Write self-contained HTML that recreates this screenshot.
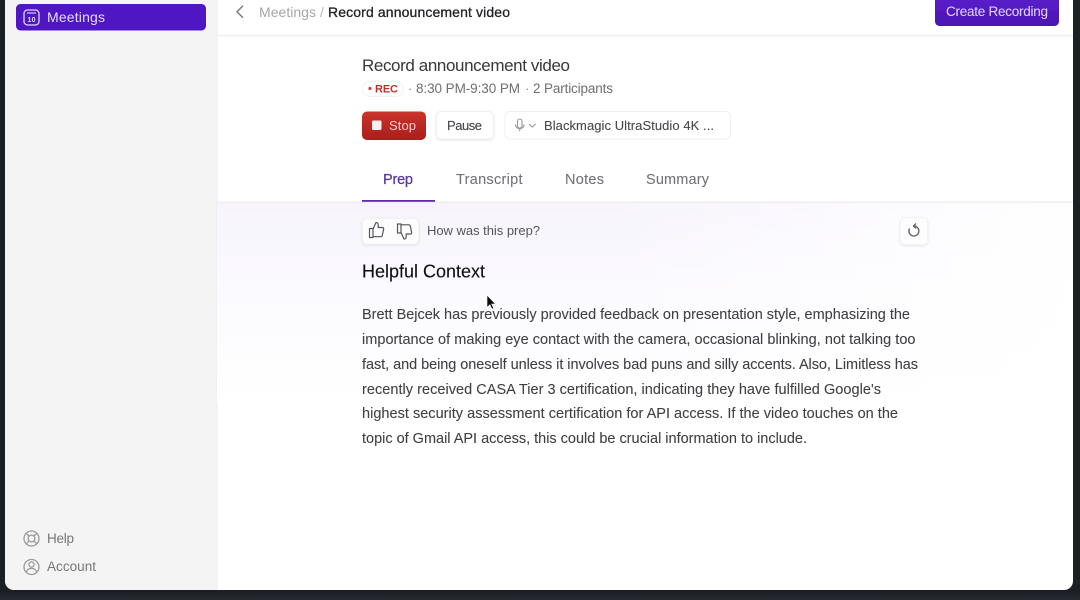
<!DOCTYPE html>
<html><head><meta charset="utf-8"><style>
html,body{margin:0;padding:0;width:1080px;height:600px;overflow:hidden;background:#1c1f25}
svg{display:block;position:absolute;left:0;top:0}
text{font-family:"Liberation Sans",sans-serif;white-space:pre}
</style></head><body>
<svg width="1080" height="600" viewBox="0 0 1080 600" xmlns="http://www.w3.org/2000/svg">
<defs>
<linearGradient id="bg" x1="0" y1="0" x2="0" y2="1"><stop offset="0" stop-color="#1a1c22"/><stop offset="1" stop-color="#272a31"/></linearGradient>
<linearGradient id="lav" x1="0" y1="0" x2="0" y2="1"><stop offset="0" stop-color="#f7f4fd"/><stop offset=".45" stop-color="#fbfafe"/><stop offset="1" stop-color="#ffffff"/></linearGradient>
<linearGradient id="fadeR" x1="0" y1="0" x2="1" y2="0"><stop offset="0" stop-color="#fff" stop-opacity="0"/><stop offset=".45" stop-color="#fff" stop-opacity="0"/><stop offset="1" stop-color="#fff" stop-opacity=".95"/></linearGradient>
<linearGradient id="stop" x1="0" y1="0" x2="0" y2="1"><stop offset="0" stop-color="#cc332b"/><stop offset="1" stop-color="#a81f1b"/></linearGradient>
<linearGradient id="cr" x1="0" y1="0" x2="0" y2="1"><stop offset="0" stop-color="#5d1fd0"/><stop offset="1" stop-color="#4a14b0"/></linearGradient>
<clipPath id="win"><rect x="5" y="-10" width="1068" height="600" rx="9"/></clipPath>
<filter id="sh" x="-20%" y="-20%" width="140%" height="150%"><feDropShadow dx="0" dy="1" stdDeviation="1.200" flood-color="#000" flood-opacity=".10"/></filter>
<filter id="soft" x="0" y="0" width="100%" height="100%" filterUnits="userSpaceOnUse"><feGaussianBlur stdDeviation=".35"/></filter>
</defs>
<rect width="1080" height="600" fill="#1c1f25"/>
<rect y="590" width="1080" height="10" fill="url(#bg)"/>
<g filter="url(#soft)">
<g clip-path="url(#win)">
<rect x="5" y="-10" width="1068" height="600" fill="#fff"/>
<rect x="5" y="-10" width="212" height="600" fill="#f4f4f5"/>
<rect x="216.500" y="-10" width="1" height="600" fill="#ececee"/>
<rect x="217" y="203" width="856" height="200" fill="url(#lav)"/>
<rect x="217" y="203" width="856" height="200" fill="url(#fadeR)"/>
<rect x="217" y="35" width="856" height="1.500" fill="#f0f0f1"/>
<rect x="217" y="201.500" width="856" height="1.500" fill="#eeeef0"/>
</g>

<!-- sidebar -->
<rect x="16" y="4" width="190" height="26.500" rx="4.500" fill="#4f15c4"/>
<rect x="24" y="10" width="15" height="15" rx="3.500" fill="none" stroke="#e4d8fb" stroke-width="1.300"/>
<path d="M27 13h9" stroke="#e4d8fb" stroke-width="1.100"/>
<text x="31.500" y="22" font-size="7" font-weight="700" fill="#e4d8fb" text-anchor="middle" textLength="8">10</text>
<text x="47" y="22" font-size="14" fill="#e6dcfb" textLength="58">Meetings</text>

<g fill="none" stroke="#9a9a9d" stroke-width="1.300">
<circle cx="31.500" cy="538.500" r="7.500"/><circle cx="31.500" cy="538.500" r="3.400"/>
<path d="M26.200 533.200l2.900 2.900M36.800 533.200l-2.900 2.900M26.200 543.800l2.900-2.900M36.800 543.800l-2.900-2.900"/>
<circle cx="31.500" cy="567" r="7.500"/><circle cx="31.500" cy="564.500" r="2.600"/>
<path d="M26.300 572.300c.8-2.800 2.800-3.900 5.200-3.900s4.400 1.100 5.200 3.900"/>
</g>
<text x="47" y="543" font-size="13.500" fill="#77777a" textLength="27">Help</text>
<text x="47" y="571" font-size="13.500" fill="#77777a" textLength="49">Account</text>

<!-- header -->
<path d="M243 5.800l-6 6 6 6" fill="none" stroke="#77777a" stroke-width="1.400"/>
<text x="259" y="17" font-size="14" fill="#a6a6a9" textLength="57">Meetings</text>
<text x="320" y="17" font-size="13.500" fill="#b5b5b8">/</text>
<text x="328" y="17" font-size="14" fill="#222226" stroke="#222226" stroke-width=".3" textLength="182">Record announcement video</text>
<rect x="935" y="-6" width="124" height="32" rx="4.500" fill="url(#cr)"/>
<text x="946" y="16" font-size="13.500" fill="#dccdfb" stroke="#dccdfb" stroke-width=".1" textLength="102">Create Recording</text>

<!-- title block -->
<text x="362" y="71" font-size="17" fill="#37373a" textLength="208">Record announcement video</text>
<rect x="362.500" y="81.500" width="41" height="15" rx="7.500" fill="#fff" stroke="#f3f2f2"/>
<circle cx="370" cy="88.500" r="1.600" fill="#c0473f"/>
<text x="375" y="92.500" font-size="11" font-weight="700" fill="#b5352e" textLength="23">REC</text>
<text x="408" y="93" font-size="13" fill="#85858a">·</text>
<text x="416" y="93" font-size="13.500" fill="#6e6e73" textLength="104">8:30 PM-9:30 PM</text>
<text x="525" y="93" font-size="13" fill="#85858a">·</text>
<text x="533" y="93" font-size="13.500" fill="#6e6e73" textLength="80">2 Participants</text>

<!-- buttons -->
<rect x="362" y="111.500" width="64" height="28.500" rx="5" fill="url(#stop)"/>
<rect x="372" y="120.500" width="9.500" height="9.500" rx="1.200" fill="#fbeeed"/>
<text x="389" y="130" font-size="13" fill="#f6cbc8" textLength="27">Stop</text>
<rect x="436.500" y="111.500" width="57" height="27.500" rx="5" fill="#fff" stroke="#f0f0f1" filter="url(#sh)"/>
<text x="447" y="130" font-size="13" fill="#49494d" stroke="#49494d" stroke-width=".15" textLength="35">Pause</text>
<rect x="505" y="111.500" width="225.500" height="27.500" rx="5" fill="#fff" stroke="#efeff1"/>
<g fill="none" stroke="#97979b" stroke-width="1.100">
<rect x="517.500" y="119" width="4.500" height="9" rx="2.250"/>
<path d="M515.500 124.500c0 2.700 2 4.200 4.250 4.200s4.250-1.500 4.250-4.200M519.750 128.700v2.500"/>
<path d="M529 124l3.300 3 3.300-3"/>
</g>
<text x="544" y="130" font-size="13" fill="#47474b" stroke="#47474b" stroke-width=".1" textLength="170">Blackmagic UltraStudio 4K ...</text>

<!-- tabs -->
<text x="383" y="184" font-size="14.500" fill="#5a399f" stroke="#5a399f" stroke-width=".25" textLength="30">Prep</text>
<text x="456" y="184" font-size="14.500" fill="#737378" stroke="#737378" stroke-width=".1" textLength="66.500">Transcript</text>
<text x="565" y="184" font-size="14.500" fill="#737378" stroke="#737378" stroke-width=".1" textLength="39">Notes</text>
<text x="646" y="184" font-size="14.500" fill="#737378" stroke="#737378" stroke-width=".1" textLength="63">Summary</text>
<rect x="362" y="200" width="73" height="1.800" fill="#5b2fae"/>

<!-- feedback -->
<rect x="362.500" y="218.500" width="56" height="25.500" rx="4.500" fill="#fdfdfe" stroke="#f3f3f5" filter="url(#sh)"/>
<g fill="none" stroke="#55555a" stroke-width="1.200" stroke-linejoin="round">
<path d="M373 228.500v9h-3.500v-9zM373 229l3-6.500c1.400 0 2.200 1 2.200 2.200v2.800h4.200c.9 0 1.400.8 1.200 1.600l-1.300 6.400c-.2.700-.7 1.200-1.400 1.200H373"/>
<path transform="translate(28,0) translate(0,461.500) scale(1,-1)" d="M373 228.500v9h-3.500v-9zM373 229l3-6.500c1.400 0 2.200 1 2.200 2.200v2.800h4.200c.9 0 1.400.8 1.200 1.600l-1.300 6.400c-.2.700-.7 1.200-1.400 1.200H373"/>
</g>
<text x="427" y="235" font-size="13" fill="#55555a" textLength="113">How was this prep?</text>
<rect x="900.500" y="217.500" width="27" height="27" rx="4.500" fill="#fdfdfe" stroke="#f3f3f5" filter="url(#sh)"/>
<g fill="none" stroke="#5f5f64" stroke-width="1.300">
<path d="M909.500 228.600A5 5 0 1 0 914 226h-.5"/>
<path d="M916 223.500l-2.500 2.500 2.500 2.500"/>
</g>

<!-- content -->
<text x="362" y="277.500" font-size="18" fill="#111114" stroke="#111114" stroke-width=".12" textLength="123">Helpful Context</text>
<g font-size="14.500" fill="#3f3f43" stroke="#3f3f43" stroke-width=".08">
<text x="362" y="319" textLength="548">Brett Bejcek has previously provided feedback on presentation style, emphasizing the</text>
<text x="362" y="344" textLength="553.500">importance of making eye contact with the camera, occasional blinking, not talking too</text>
<text x="362" y="369" textLength="556">fast, and being oneself unless it involves bad puns and silly accents. Also, Limitless has</text>
<text x="362" y="394" textLength="519">recently received CASA Tier 3 certification, indicating they have fulfilled Google's</text>
<text x="362" y="418" textLength="536">highest security assessment certification for API access. If the video touches on the</text>
<text x="362" y="443" textLength="445">topic of Gmail API access, this could be crucial information to include.</text>
</g>

<!-- cursor -->
<path d="M487 295v12.500l2.900-2.700 2 4.300 1.800-.8-2-4.200h3.900z" fill="#111" stroke="#fff" stroke-width=".6"/>
</g>
</svg>
</body></html>
